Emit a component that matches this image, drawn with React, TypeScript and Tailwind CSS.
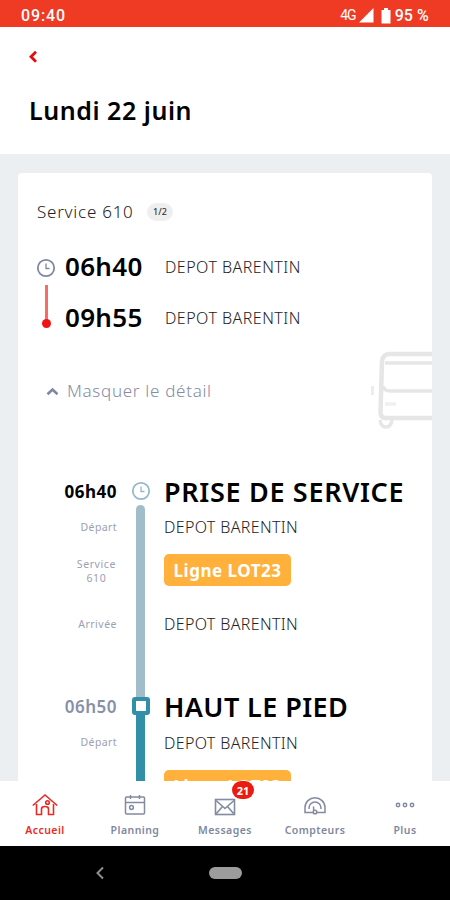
import clsx from "clsx";
import type { ReactNode } from "react";

const stops = [
	{ time: "06h40", place: "DEPOT BARENTIN" },
	{ time: "09h55", place: "DEPOT BARENTIN" },
] as const;

type SegmentProps = {
	time: string;
	title: string;
	titleClassName: string;
	place: string;
	line: string;
	service?: string;
	arrival?: string;
	current?: boolean;
};

const segments: SegmentProps[] = [
	{
		time: "06h40",
		title: "PRISE DE SERVICE",
		titleClassName: "tracking-[0.68px]",
		place: "DEPOT BARENTIN",
		line: "Ligne LOT23",
		service: "610",
		arrival: "DEPOT BARENTIN",
	},
	{
		time: "06h50",
		title: "HAUT LE PIED",
		titleClassName: "tracking-[0.4px]",
		place: "DEPOT BARENTIN",
		line: "Ligne LOT23",
		current: true,
	},
];

const navItems = [
	{ label: "Accueil", icon: <HomeIcon />, active: true },
	{ label: "Planning", icon: <CalendarIcon /> },
	{ label: "Messages", icon: <MailIcon />, badge: "21" },
	{ label: "Compteurs", icon: <GaugeIcon /> },
	{ label: "Plus", icon: <DotsIcon /> },
];

export default function App() {
	return (
		<div className="flex h-[900px] w-[450px] flex-col overflow-hidden bg-[#ebeff2] font-['Noto_Sans','Open_Sans',sans-serif] text-black">
			<StatusBar />
			<header className="h-[127px] shrink-0 bg-white px-[29px] pt-[23px]">
				<svg
					width="10"
					height="14"
					viewBox="0 0 10 14"
					className="-ml-px block"
					fill="none"
					aria-hidden>
					<path d="M8 1.8 3 6.8l5 5" stroke="#e60c0c" strokeWidth="2.8" />
				</svg>
				<h1 className="mt-[28px] text-[25px] leading-9 font-semibold tracking-[0.55px] whitespace-nowrap">
					Lundi 22 juin
				</h1>
			</header>
			<main className="min-h-0 flex-1 overflow-hidden px-[18px] pt-[19px]">
				<ServiceCard />
			</main>
			<BottomNav />
			<SystemBar />
		</div>
	);
}

function StatusBar() {
	return (
		<div className="flex h-[27px] shrink-0 items-center bg-[#ef3a24] px-[21px] pt-1 font-[Roboto,sans-serif] text-white">
			<span className="text-[16px] font-medium tracking-[0.9px]">09:40</span>
			<span className="ml-auto text-[14px] tracking-[-1px]">4G</span>
			<svg width="15" height="15" viewBox="0 0 15 15" className="ml-[3px]" aria-hidden>
				<path d="M14.5 0v14.5H0z" fill="#fff" />
			</svg>
			<svg width="10" height="16" viewBox="0 0 10 16" className="ml-[7px]" aria-hidden>
				<path d="M3 0h4v2h2.500v13.500h-9V2H3z" fill="#fff" />
			</svg>
			<span className="ml-[4px] text-[16px] font-medium tracking-[0.1px]">95 %</span>
		</div>
	);
}

function ServiceCard() {
	return (
		<section className="relative h-[608px] overflow-hidden rounded-t-[4px] bg-white">
			<div className="flex h-[78px] items-center pl-[19px]">
				<h2 className="w-[96px] text-[17px] font-light tracking-[0.75px] whitespace-nowrap text-[#222]">Service 610</h2>
				<span className="ml-[14px] flex h-[18px] w-[26px] items-center justify-center rounded-full bg-[#efefef] text-[9px] font-medium text-[#333]">
					1/2
				</span>
			</div>

			<div className="flex pl-[18px]">
				<div className="flex w-5 flex-col items-center pt-[7px]">
					<ClockIcon color="#7f87a3" />
					<span className="mt-[7px] h-[37px] w-[3px] bg-[#fa6b66]" />
					<span className="-mt-[3px] size-[9px] rounded-full bg-[#f01414]" />
				</div>
				<div className="-mt-[10px] mb-px ml-[9px]">
					{stops.map((stop) => (
						<div key={stop.time} className="flex h-[51px] items-center">
							<span className="w-[100px] text-[26px] font-semibold tracking-[0.3px]">{stop.time}</span>
							<span className="text-[16px] font-light tracking-[0.48px] text-[#222]">{stop.place}</span>
						</div>
					))}
				</div>
			</div>

			<BusDrawing />

			<button
				type="button"
				className="mt-[35px] flex h-[24px] items-center pl-[28px] text-[17px] font-light tracking-[0.7px] text-[#858ca5]">
				<svg width="13" height="9" viewBox="0 0 13 9" className="mr-[8px]" fill="none" aria-hidden>
					<path d="m1.500 7.300 5-4.800 5 4.800" stroke="#7f87a3" strokeWidth="2.600" />
				</svg>
				Masquer le détail
			</button>

			<div className="mt-[75px]">
				{segments.map((segment) => (
					<Segment key={segment.title} {...segment} />
				))}
			</div>
		</section>
	);
}

function Segment({ time, title, titleClassName, place, line, service, arrival, current }: SegmentProps) {
	return (
		<div className="flex h-[215px]">
			<div className="w-[99px] text-right text-[10.5px] tracking-[0.4px] text-[#9ba1b4]">
				<div
					className={clsx(
						"flex h-[28px] items-center justify-end text-[17px] tracking-[0.5px]",
						current ? "font-semibold text-[#8790a8]" : "font-bold text-black",
					)}>
					{time}
				</div>
				<div className="flex h-[43px] items-center justify-end">Départ</div>
				{service && (
					<div className="flex h-[44px] items-center justify-end pr-px text-center leading-[14px] tracking-[0.6px]">
						Service
						<br />
						{service}
					</div>
				)}
				{arrival && <div className="flex h-[64px] items-center justify-end tracking-[0.5px]">Arrivée</div>}
			</div>

			<div className="flex w-[47px] flex-col items-center">
				{current ? (
					<>
						<span className="mt-1 size-[18px] shrink-0 rounded-[3px] border-4 border-[#318fa8] bg-white" />
						<span className="w-[9px] flex-1 bg-[#318fa8]" />
					</>
				) : (
					<>
						<span className="mt-[3px] mb-[4px]">
							<ClockIcon color="#94b9c9" />
						</span>
						<span className="-mb-1 w-[9px] flex-1 rounded-t-full bg-[#a1bdca]" />
					</>
				)}
			</div>

			<div className="text-[16px] font-light tracking-[0.35px] whitespace-nowrap text-[#222]">
				<h3 className={clsx("flex h-[28px] items-center text-[27px] font-semibold text-black", titleClassName)}>
					{title}
				</h3>
				<div className={clsx("flex items-center", current ? "h-[43px]" : "h-[42px]")}>{place}</div>
				<div className="flex h-[44px] items-center">
					<span className="flex h-8 w-[127px] items-center justify-center rounded-[5px] bg-[#ffb13b] pt-px text-[17px] font-bold tracking-[0.5px] text-white">
						{line}
					</span>
				</div>
				{arrival && <div className="flex h-[64px] items-center">{arrival}</div>}
			</div>
		</div>
	);
}

function BottomNav() {
	return (
		<nav className="grid h-[65px] shrink-0 grid-cols-5 bg-white">
			{navItems.map((item) => (
				<NavItem key={item.label} {...item} />
			))}
		</nav>
	);
}

type NavItemProps = {
	label: string;
	icon: ReactNode;
	active?: boolean;
	badge?: string;
};

function NavItem({ label, icon, active, badge }: NavItemProps) {
	return (
		<a
			className={clsx(
				"flex flex-col items-center pt-[11px] text-[10.5px] leading-[15px] font-semibold tracking-[0.45px]",
				active ? "text-[#ee2a24]" : "text-[#8088a0]",
			)}>
			<span className="relative flex h-[26px] items-center">
				{icon}
				{badge && (
					<span className="absolute -top-[11px] left-[18px] flex h-[18px] w-[22px] items-center justify-center rounded-full bg-[#ea1c12] text-[11px] font-bold tracking-normal text-white">
						{badge}
					</span>
				)}
			</span>
			<span className="mt-[5px]">{label}</span>
		</a>
	);
}

function SystemBar() {
	return (
		<div className="flex h-[54px] shrink-0 items-center bg-black pl-[95px]">
			<svg width="10" height="14" viewBox="0 0 10 14" fill="none" aria-hidden>
				<path d="M8 1.500 2.500 7 8 12.500" stroke="#8e8e8e" strokeWidth="2" />
			</svg>
			<span className="ml-[104px] h-3 w-[33px] rounded-full bg-[#9c9c9c]" />
		</div>
	);
}

function ClockIcon({ color }: { color: string }) {
	return (
		<svg width="20" height="20" viewBox="0 0 20 20" className="block" fill="none" stroke={color} aria-hidden>
			<circle cx="10" cy="10" r="8.200" strokeWidth="1.800" />
			<path d="M10 5.500V10.500h3.500" strokeWidth="1.300" />
		</svg>
	);
}

// Only the front half of the bus shows, the card edge cuts the rest
function BusDrawing() {
	return (
		<svg
			width="64"
			height="84"
			viewBox="0 0 64 84"
			className="absolute top-[176px] right-0"
			fill="none"
			stroke="#e6e6e6"
			aria-hidden>
			<path d="M66 5H22q-7 0-8 7L12.500 63q0 6 5 6H66" strokeWidth="4.500" />
			<path d="M66 14H17M66 42H22q-6 0-7-5" strokeWidth="3.500" />
			<path d="M17 55h11" strokeWidth="3.500" stroke="#f0f0f0" />
			<path d="M4.500 37v9" strokeWidth="3" stroke="#ededed" />
			<path d="M12 71q1 7 6 7t6-7" strokeWidth="3.500" />
		</svg>
	);
}

function HomeIcon() {
	return (
		<svg width="26" height="24" viewBox="0 0 26 24" fill="none" stroke="#e92a24" strokeWidth="1.600" aria-hidden>
			<path d="M.8 12.500 13 2l12.200 10.500" />
			<path d="M4.500 11v10.500h5V16q0-2.500 3.500-2.500t3.500 2.500v5.500h5V11" />
			<circle cx="15.500" cy="9.500" r="1.800" />
		</svg>
	);
}

function CalendarIcon() {
	return (
		<svg width="22" height="22" viewBox="0 0 22 22" fill="none" stroke="#838ba3" strokeWidth="1.500" aria-hidden>
			<rect x="1.500" y="3" width="19" height="17" rx="1" />
			<path d="M1.500 8.500h19M6.500 1v4M15.500 1v4" />
			<circle cx="7.500" cy="13.500" r="1.900" />
		</svg>
	);
}

function MailIcon() {
	return (
		<svg width="22" height="18" viewBox="0 0 22 18" className="mt-[3px]" fill="none" stroke="#838ba3" strokeWidth="1.600" aria-hidden>
			<rect x="1.500" y="1.500" width="19" height="15" />
			<path d="m2 2.500 9 8 9-8M2 16l6.500-7.500M20 16l-6.500-7.500" />
		</svg>
	);
}

function GaugeIcon() {
	return (
		<svg width="24" height="20" viewBox="0 0 24 20" className="mt-[2px]" fill="none" stroke="#838ba3" strokeWidth="1.500" aria-hidden>
			<path d="M10 16.500H2V11.500a10 9.700 0 0 1 20 0v5h-8" />
			<path d="M6 13V12a6 6 0 0 1 12 0v1" />
			<path d="m10.500 10.500.2 4" />
			<circle cx="12" cy="16" r="1.800" />
		</svg>
	);
}

function DotsIcon() {
	return (
		<svg width="20" height="6" viewBox="0 0 20 6" className="-mt-px" fill="none" stroke="#838ba3" strokeWidth="1.500" aria-hidden>
			<circle cx="3" cy="3" r="1.700" />
			<circle cx="10" cy="3" r="1.700" />
			<circle cx="17" cy="3" r="1.700" />
		</svg>
	);
}
